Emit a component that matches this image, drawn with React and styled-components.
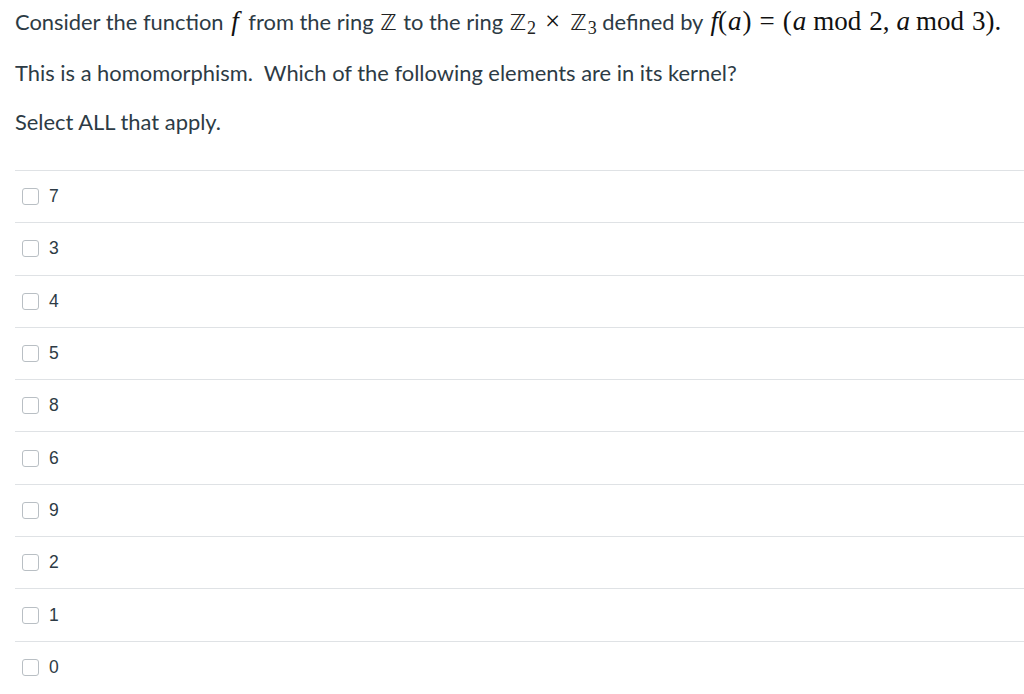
import React from 'react'
import styled, { createGlobalStyle } from 'styled-components'

const Global = createGlobalStyle`
  body {
    margin: 0;
    background: #fff;
    font-family: Lato, "Noto Sans", sans-serif;
    color: #2d3b45;
  }
`

const Page = styled.div`
  padding: 6px 0 0 15px;
`

const Para = styled.p`
  margin: 0 0 19.5px;
  font-size: 21.9px;
  line-height: 30px;
  white-space: nowrap;
`

const M = styled.span`
  font-family: "Liberation Serif", "DejaVu Serif", serif;
  font-style: ${p => (p.$i ? 'italic' : 'normal')};
  font-size: 27px;
  color: #111;
  padding: ${p => p.$pad || '0'};
`

const DS = styled.span`
  font-family: "DejaVu Sans", sans-serif;
  font-size: 22px;
  color: #222;
  padding: 0 1px;
`

const Sub = styled.sub`
  font-family: "Liberation Serif", serif;
  font-size: 18px;
  vertical-align: -4px;
  line-height: 0;
  color: #222;
`

const Answers = styled.div`
  margin-top: 33px;
`

const Row = styled.label`
  display: flex;
  align-items: center;
  gap: 10px;
  height: 51.3px;
  border-top: 1px solid #dfe2e5;
  padding-left: 7px;
  font-family: "Liberation Sans", Arial, sans-serif;
  font-size: 17.5px;
  color: #2d3b45;
`

const Box = styled.span`
  width: 15px;
  height: 15px;
  border: 1px solid #b9bfc4;
  border-radius: 3px;
  background: #fff;
  flex: none;
`

const options = ['7', '3', '4', '5', '8', '6', '9', '2', '1', '0']

export default function App() {
  return (
    <Page>
      <Global />
      <Para>
        Consider the function <M $i $pad="0 4px 0 2px">f</M> from the ring <DS>ℤ</DS> to the ring{' '}
        <DS>ℤ</DS><Sub>2</Sub><M $pad="0 9px">×</M><DS>ℤ</DS><Sub>3</Sub> defined by{' '}
        <M $i $pad="0 0 0 2px">f</M><M>(</M><M $i $pad="0 1px">a</M><M>)</M><M $pad="0 8px">=</M><M>(</M>
        <M $i $pad="0 1px">a</M>
        <M $pad="0 0 0 6px">mod</M><M $pad="0 0 0 8px">2,</M>
        <M $i $pad="0 0 0 7px">a</M><M $pad="0 0 0 6px">mod</M><M $pad="0 0 0 8px">3).</M>
      </Para>
      <Para>This is a homomorphism.&nbsp; Which of the following elements are in its kernel?</Para>
      <Para>Select ALL that apply.</Para>
      <Answers>
        {options.map(o => (
          <Row key={o}>
            <Box />
            {o}
          </Row>
        ))}
      </Answers>
    </Page>
  )
}
